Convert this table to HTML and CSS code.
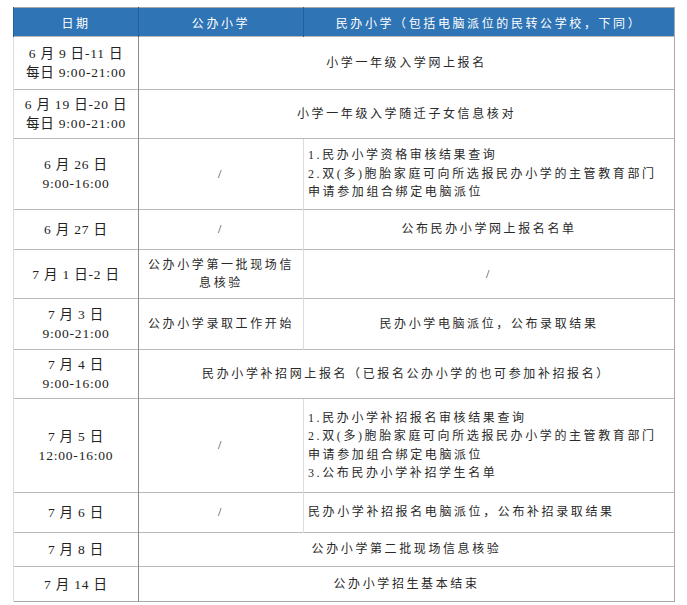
FILE: index.html
```html
<!DOCTYPE html>
<html lang="zh">
<head>
<meta charset="utf-8">
<link rel="stylesheet" href="styles.css">
</head>
<body>
<table class="sched">
  <colgroup><col class="c1"><col class="c2"><col class="c3"></colgroup>
  <thead>
    <tr class="hd"><th>日期</th><th>公办小学</th><th>民办小学（包括电脑派位的民转公学校，下同）</th></tr>
  </thead>
  <tbody>
    <tr class="r53"><td class="date">6 月 9 日-11 日<br>每日 9:00-21:00</td><td colspan="2" class="mid">小学一年级入学网上报名</td></tr>
    <tr class="r49"><td class="date">6 月 19 日-20 日<br>每日 9:00-21:00</td><td colspan="2" class="mid">小学一年级入学随迁子女信息核对</td></tr>
    <tr class="r71"><td class="date">6 月 26 日<br>9:00-16:00</td><td class="mid">/</td><td class="left">1.民办小学资格审核结果查询<br>2.双(多)胞胎家庭可向所选报民办小学的主管教育部门申请参加组合绑定电脑派位</td></tr>
    <tr class="r40"><td class="date">6 月 27 日</td><td class="mid">/</td><td class="mid">公布民办小学网上报名名单</td></tr>
    <tr class="r49"><td class="date">7 月 1 日-2 日</td><td class="mid">公办小学第一批现场信息核验</td><td class="mid">/</td></tr>
    <tr class="r51"><td class="date">7 月 3 日<br>9:00-21:00</td><td class="mid">公办小学录取工作开始</td><td class="mid">民办小学电脑派位，公布录取结果</td></tr>
    <tr class="r49"><td class="date">7 月 4 日<br>9:00-16:00</td><td colspan="2" class="mid">民办小学补招网上报名（已报名公办小学的也可参加补招报名）</td></tr>
    <tr class="r94"><td class="date">7 月 5 日<br>12:00-16:00</td><td class="mid">/</td><td class="left">1.民办小学补招报名审核结果查询<br>2.双(多)胞胎家庭可向所选报民办小学的主管教育部门申请参加组合绑定电脑派位<br>3.公布民办小学补招学生名单</td></tr>
    <tr class="r40"><td class="date">7 月 6 日</td><td class="mid">/</td><td class="left">民办小学补招报名电脑派位，公布补招录取结果</td></tr>
    <tr class="r34"><td class="date">7 月 8 日</td><td colspan="2" class="mid">公办小学第二批现场信息核验</td></tr>
    <tr class="r35"><td class="date">7 月 14 日</td><td colspan="2" class="mid">公办小学招生基本结束</td></tr>
  </tbody>
</table>
</body>
</html>
```
FILE: styles.css
```css
html, body {
  margin: 0;
  background: #ffffff;
}
body {
  padding: 7px 13px;
  font-family: "Liberation Serif", "Noto Sans CJK SC", serif;
  font-size: 12px;
  color: #2a2a2a;
}
.sched {
  border-collapse: collapse;
  table-layout: fixed;
  width: 661px;
  border: 1px solid #a8a8a8;
}
.c1 { width: 125px; }
.c2 { width: 165px; }
.c3 { width: 371px; }
.sched th {
  background: #2f74b5;
  color: #ffffff;
  font-weight: 400;
  height: 28px;
  padding: 0 4px;
  letter-spacing: 2.6px;
  border-left: 1px solid #235f98;
  font-family: "Noto Sans CJK SC", sans-serif;
  font-size: 12px;
  white-space: nowrap;
}
.sched td {
  border-top: 1px solid #b8b8b8;
  border-left: 1px solid #dcdcdc;
  padding: 0 4px;
  line-height: 18.5px;
  letter-spacing: 2.6px;
  vertical-align: middle;
}
.sched td.date {
  text-align: center;
  font-size: 13.5px;
  color: #222222;
  border-right: 1px solid #8a8a8a;
  letter-spacing: 0.8px;
  line-height: 19px;
}
.mid { text-align: center; }
.left { text-align: left; }
.r53 { height: 53px; }
.r49 { height: 49px; }
.r51 { height: 51px; }
.r71 { height: 71px; }
.r40 { height: 40px; }
.r94 { height: 94px; }
.r34 { height: 34px; }
.r35 { height: 35px; }
```
